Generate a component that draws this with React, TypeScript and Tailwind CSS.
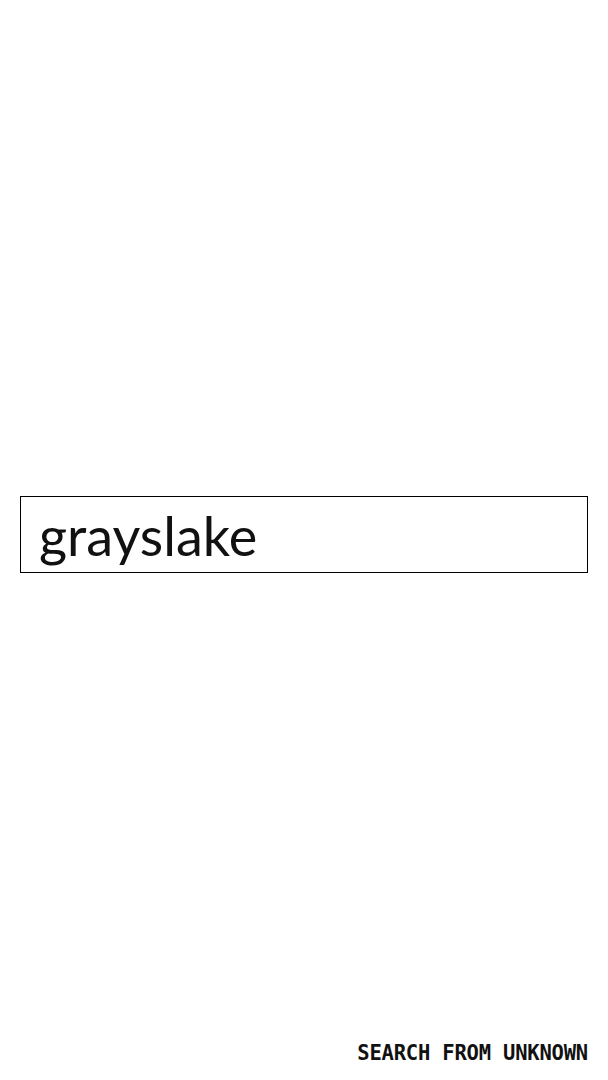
export default function App() {
  return (
    <div className="flex h-screen w-full flex-col bg-white text-black">
      {/* search box */}
      <div className="flex flex-1 items-center px-5 pt-[26px]">
        <div className="flex h-[77px] w-full items-center border-[1.5px] border-black px-[18px] pt-[4px]">
          <span className="text-[54px] leading-none text-[#111]" style={{ fontFamily: 'Lato, "Noto Sans", sans-serif' }}>
            grayslake
          </span>
        </div>
      </div>

      {/* footer */}
      <div className="flex justify-end px-5 pb-[17px]">
        <span
          className="text-[20.5px] font-bold leading-none tracking-[-0.2px] text-[#111]"
          style={{ fontFamily: '"DejaVu Sans Mono", "Liberation Mono", monospace' }}
        >
          SEARCH FROM UNKNOWN
        </span>
      </div>
    </div>
  );
}
